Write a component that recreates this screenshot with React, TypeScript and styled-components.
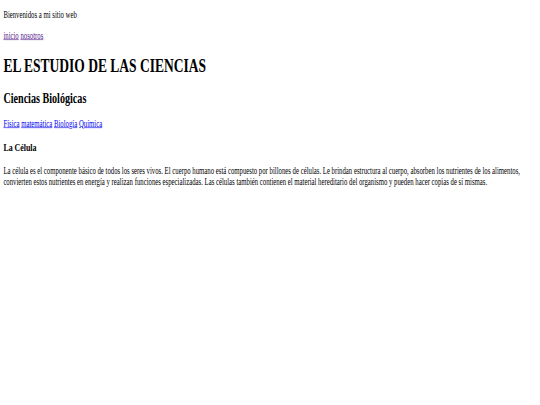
import * as React from "react";
import styled, { createGlobalStyle } from "styled-components";

// the page was laid out in a 1280px-wide window and then squeezed into 540x405
const GlobalStyle = createGlobalStyle`
  html, body {
    margin: 0;
    padding: 0;
    background: #ffffff;
    overflow: hidden;
  }
`;

const Viewport = styled.div`
  width: 540px;
  height: 405px;
  overflow: hidden;
  background: #ffffff;
`;

const Page = styled.div`
  width: 1280px;
  height: 668px;
  box-sizing: border-box;
  padding: 0 8px;
  transform: scale(0.421875, 0.607);
  transform-origin: 0 0;
  font-family: "Liberation Serif", "Times New Roman", serif;
  font-size: 16px;
  color: #000000;
  display: flow-root;
`;

const Text = styled.p`
  margin: 16px 0;
`;

const Nav = styled.nav`
  margin: 16px 0;
`;

const Link = styled.a<{ $visited?: boolean }>`
  color: ${({ $visited }) => ($visited ? "#551a8b" : "#0000ee")};
  text-decoration: underline;
  cursor: pointer;
`;

const Title = styled.h1`
  font-size: 32px;
  font-weight: bold;
  margin: 21.44px 0;
`;

const Subtitle = styled.h2`
  font-size: 24px;
  font-weight: bold;
  margin: 19.92px 0;
`;

const Section = styled.h3`
  font-size: 18.72px;
  font-weight: bold;
  margin: 18.72px 0;
`;

const topLinks = [
  { label: "inicio", visited: true },
  { label: "nosotros", visited: true },
];

const subjects = ["Física", "matemática", "Biología", "Química"];

export default function App() {
  return (
    <Viewport>
      <GlobalStyle />
      <Page>
        <Text>Bienvenidos a mi sitio web</Text>
        <Nav>
          {topLinks.map((l, i) => (
            <React.Fragment key={l.label}>
              {i > 0 && " "}
              <Link href="#" $visited={l.visited}>
                {l.label}
              </Link>
            </React.Fragment>
          ))}
        </Nav>
        <Title>EL ESTUDIO DE LAS CIENCIAS</Title>
        <Subtitle>Ciencias Biológicas</Subtitle>
        <Nav>
          {subjects.map((s, i) => (
            <React.Fragment key={s}>
              {i > 0 && " "}
              <Link href="#">{s}</Link>
            </React.Fragment>
          ))}
        </Nav>
        <Section>La Célula</Section>
        <Text>
          La célula es el componente básico de todos los seres vivos. El cuerpo
          humano está compuesto por billones de células. Le brindan estructura
          al cuerpo, absorben los nutrientes de los alimentos, convierten estos
          nutrientes en energía y realizan funciones especializadas. Las
          células también contienen el material hereditario del organismo y
          pueden hacer copias de sí mismas.
        </Text>
      </Page>
    </Viewport>
  );
}
